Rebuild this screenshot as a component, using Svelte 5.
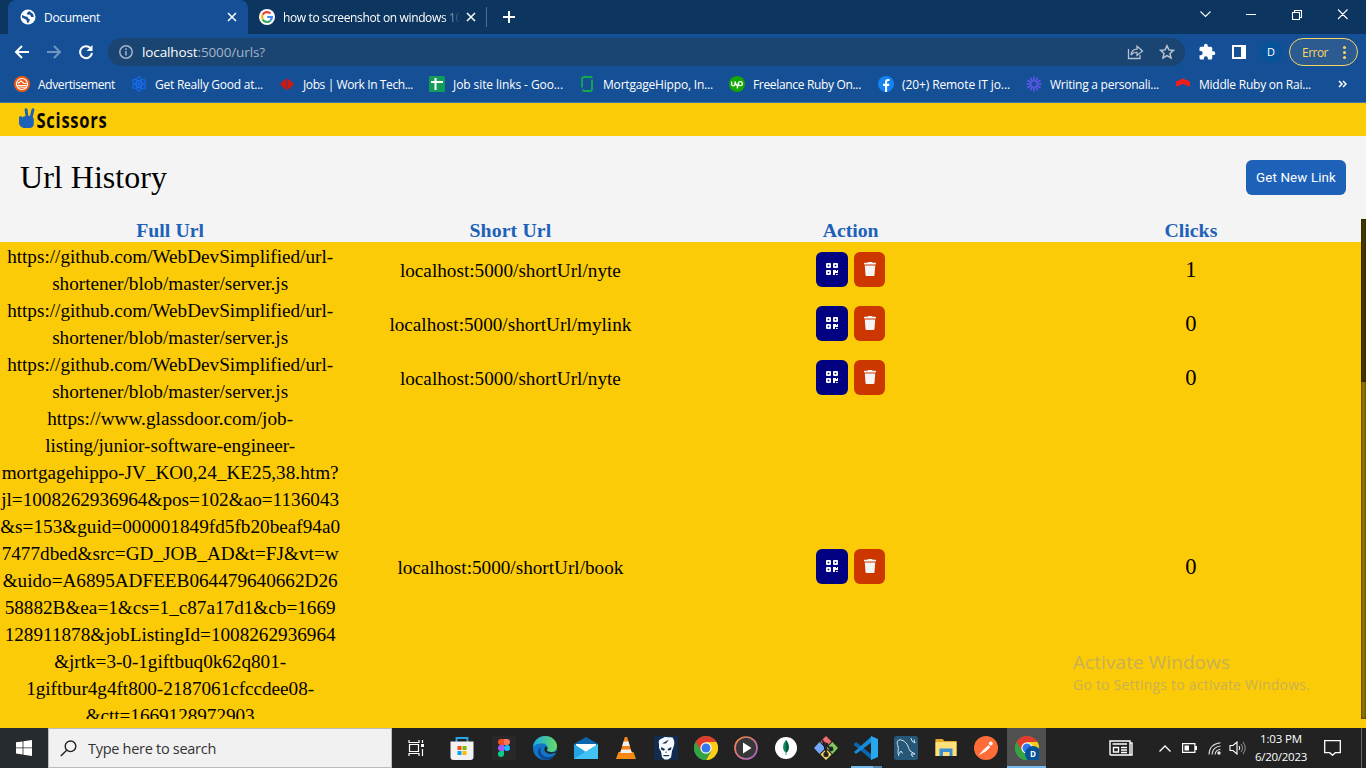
<script>
  // Spreads a single line of text to the given pixel width.
  function fit(node, width) {
    node.style.letterSpacing = '0px';
    const natural = node.getBoundingClientRect().width;
    const count = node.textContent.length;
    node.style.letterSpacing = (width - natural) / count + 'px';
  }

  const bookmarks = [
    { icon: 'ad', label: 'Advertisement', w: 77, x: 14 },
    { icon: 'atom', label: 'Get Really Good at...', w: 108, x: 131 },
    { icon: 'leaf', label: 'Jobs | Work In Tech...', w: 110, x: 279 },
    { icon: 'sheet', label: 'Job site links - Goo...', w: 110, x: 429 },
    { icon: 'hippo', label: 'MortgageHippo, In...', w: 110, x: 579 },
    { icon: 'up', label: 'Freelance Ruby On...', w: 108, x: 729 },
    { icon: 'fb', label: '(20+) Remote IT jo...', w: 108, x: 878 },
    { icon: 'burst', label: 'Writing a personali...', w: 109, x: 1026 },
    { icon: 'chev', label: 'Middle Ruby on Rai...', w: 112, x: 1175 }
  ];

  const github = [
    ['https://github.com/WebDevSimplified/url-', 326],
    ['shortener/blob/master/server.js', 236]
  ];
  const rows = [
    { full: github, short: 'localhost:5000/shortUrl/nyte', w: 221, clicks: 1 },
    { full: github, short: 'localhost:5000/shortUrl/mylink', w: 242, clicks: 0 },
    { full: github, short: 'localhost:5000/shortUrl/nyte', w: 221, clicks: 0 },
    {
      full: [
        ['https://www.glassdoor.com/job-', 246],
        ['listing/junior-software-engineer-', 250],
        ['mortgagehippo-JV_KO0,24_KE25,38.htm?', 337],
        ['jl=1008262936964&pos=102&ao=1136043', 338],
        ['&s=153&guid=000001849fd5fb20beaf94a0', 340],
        ['7477dbed&src=GD_JOB_AD&t=FJ&vt=w', 337],
        ['&uido=A6895ADFEEB064479640662D26', 335],
        ['58882B&ea=1&cs=1_c87a17d1&cb=1669', 331],
        ['128911878&jobListingId=1008262936964', 331],
        ['&jrtk=3-0-1giftbuq0k62q801-', 232],
        ['1giftbur4g4ft800-2187061cfccdee08-', 288],
        ['&ctt=1669128972903', 169]
      ],
      short: 'localhost:5000/shortUrl/book', w: 226, clicks: 0
    }
  ];

  const apps = ['store', 'figma', 'edge', 'mail', 'vlc', 'skull', 'chrome', 'play', 'mongo', 'git', 'code', 'mysql', 'folder', 'postman', 'profile'];
  const rays = [0, 30, 60, 90, 120, 150, 180, 210, 240, 270, 300, 330];
</script>

{#snippet chromeLogo()}
  <circle cx="12" cy="12" r="12" fill="#34a344" />
  <path d="M12 12 1.6 6A12 12 0 0 1 22.4 6Z" fill="#e33b2e" />
  <path d="M12 6H22.4A12 12 0 0 1 12 24l5.2-9Z" fill="#fdcc17" />
  <path d="M1.6 6 6.8 15 12 12V6Z" fill="#e33b2e" />
  <path d="M1.6 6A12 12 0 0 0 12 24l5-9-10 0Z" fill="#34a344" />
  <circle cx="12" cy="12" r="5.7" fill="#fff" />
  <circle cx="12" cy="12" r="4.5" fill="#3478ec" />
{/snippet}

<div class="screen">
  <div class="tabs">
    <div class="tab active">
      <svg class="fav" viewBox="0 0 16 16" width="16" height="16"><circle cx="8" cy="8" r="7.5" fill="#fff" /><path d="M2 6l3.5 1.5 2 .3.6 1.7 1.8.7-.9 3-1.7.8-1-3.3L2 8.5zM9 2l-2.3 2.4.8 1.3 2.5-.2 1.2 2.4 2.6.2-.7-3z" fill="#154f96" /></svg>
      <span class="title" use:fit={56}>Document</span>
      <svg class="close" viewBox="0 0 10 10" width="10" height="10"><path d="M1 1l8 8M9 1L1 9" stroke="#fff" stroke-width="1.5" /></svg>
    </div>
    <div class="tab second">
      <svg class="fav" viewBox="0 0 16 16" width="16" height="16"><circle cx="8" cy="8" r="8" fill="#fff" /><g fill="none" stroke-width="2.2"><path d="M11.5 4.6A4.9 4.9 0 0 0 3.7 5.7" stroke="#e94235" /><path d="M3.7 5.7a4.9 4.9 0 0 0 0 4.7" stroke="#fabb05" /><path d="M3.7 10.4a4.9 4.9 0 0 0 7.6 1.3" stroke="#34a853" /><path d="M11.3 11.7A4.9 4.9 0 0 0 12.9 8H8.2" stroke="#4285f4" /></g></svg>
      <span class="title fade" use:fit={179}>how to screenshot on windows 10</span>
      <svg class="close" viewBox="0 0 10 10" width="10" height="10"><path d="M1 1l8 8M9 1L1 9" stroke="#fff" stroke-width="1.5" /></svg>
    </div>
    <svg class="plus" viewBox="0 0 12 12" width="12" height="12"><path d="M6 0v12M0 6h12" stroke="#fff" stroke-width="2" /></svg>
    <svg class="winctl" viewBox="0 0 166 34" width="166" height="34" fill="none" stroke="#fff" stroke-width="1.1">
      <path d="M.5 11.500l5 5 5-5M46 14.500h10M92.500 12.500h7v7h-7zM94.500 12.500v-2h7v7h-2M138 9.500l9.500 9.500M147.500 9.500l-9.500 9.500" />
    </svg>
  </div>

  <div class="toolbar">
    <svg class="nav" viewBox="0 0 86 16" width="86" height="16" fill="none" stroke="#fff" stroke-width="2">
      <path d="M15 8H2M8 2L2 8l6 6" /><path d="M33 8h13M40 2l6 6-6 6" stroke="#7095c2" /><path d="M76.600 4.200A6 6 0 1 0 78 9" /><path d="M78.500 1v6h-6z" fill="#fff" stroke="none" />
    </svg>
    <div class="address">
      <svg viewBox="0 0 14 14" width="14" height="14" fill="none" stroke="#a3b4c9" stroke-width="1.5"><circle cx="7" cy="7" r="6.200" /><path d="M7 6v4.500M7 3.300v1.600" /></svg>
      <span class="url" use:fit={123}>localhost<i>:5000/urls?</i></span>
      <svg class="addr-icons" viewBox="0 0 48 16" width="48" height="16" fill="none" stroke="#b9c3cf" stroke-width="1.300"><path d="M1.500 5v9.500h11.500V11M4 11c.6-4 3-5.800 6-5.800V2.200L15.500 7 10 11.500V8.500C7.500 8.300 5.500 9 4 11z" /><path d="M40 1.700l1.900 4.200 4.500.5-3.400 3 1 4.500-4-2.300-4 2.300 1-4.500-3.400-3 4.500-.5z" stroke-width="1.500" /></svg>
    </div>
    <svg class="puzzle" viewBox="0 0 24 24" width="18" height="18"><path fill="#fff" d="M20.500 11H19V7a2 2 0 0 0-2-2h-4V3.500a2.500 2.500 0 0 0-5 0V5H4a2 2 0 0 0-2 2v3.800h1.500a2.700 2.700 0 0 1 0 5.400H2V20a2 2 0 0 0 2 2h3.800v-1.500a2.700 2.700 0 0 1 5.400 0V22H17a2 2 0 0 0 2-2v-4h1.500a2.500 2.500 0 0 0 0-5z" /></svg>
    <svg class="panel" viewBox="0 0 14 14" width="14" height="14"><path fill="#fff" fill-rule="evenodd" d="M0 0h14v14H0zM2 2v10h7V2z" /></svg>
    <div class="avatar">D</div>
    <div class="error"><span use:fit={26}>Error</span><b></b></div>
  </div>

  <div class="bookmarks">
    {#each bookmarks as b, i}
      <div class="bm" style:width="{(bookmarks[i + 1]?.x ?? 1338) - b.x}px">
        <svg viewBox="0 0 16 16" width="16" height="16">
          {#if b.icon === 'ad'}
            <circle cx="8" cy="8" r="8" fill="#ee5c16" /><circle cx="8" cy="8" r="5.500" fill="none" stroke="#fff" stroke-width="1.200" /><path d="M3.500 9.500h9M4 7.500l3-2.500 3 2.500 2.500 0M4.500 11l7 .3" fill="none" stroke="#fff" stroke-width="1.100" />
          {:else if b.icon === 'atom'}
            <g fill="none" stroke="#1769e8" stroke-width="1.300"><ellipse cx="8" cy="8" rx="2.700" ry="7.200" /><ellipse cx="8" cy="8" rx="2.700" ry="7.200" transform="rotate(60 8 8)" /><ellipse cx="8" cy="8" rx="2.700" ry="7.200" transform="rotate(120 8 8)" /></g><circle cx="8" cy="8" r="1.500" fill="#1769e8" />
          {:else if b.icon === 'leaf'}
            <path d="M7.600 2v12.500L5.500 12.300H3.800l.3-1.800L1 8.700l1.300-.9-.4-2 1.800.4L5.400 3.500 6 4.200zM8.400 2v12.500l2.100-2.200h1.700l-.3-1.800L15 8.700l-1.300-.9.4-2-1.800.4-1.700-2.700-.6.7z" fill="#d3170c" />
          {:else if b.icon === 'sheet'}
            <rect width="16" height="16" rx="1.500" fill="#119d58" /><path d="M6.500 2v12M2 6h12" stroke="#fff" stroke-width="2" />
          {:else if b.icon === 'hippo'}
            <path d="M3 11.500V3a2 2 0 0 1 2-2h8M5 15h6a2 2 0 0 0 2-2V3.500M3 14.500h2M13 1v1" fill="none" stroke="#16a94a" stroke-width="1.800" />
          {:else if b.icon === 'up'}
            <circle cx="8" cy="8" r="8" fill="#14a800" /><path d="M2.700 5.500v2.400c0 2.500 3.300 2.500 3.300 0V5.500c.5 2 1.500 4 2.500 4.700M8.200 12.500l1-5c.6-2.700 4.200-2.200 4.200.2 0 2.200-2.700 2.500-4 .8" fill="none" stroke="#fff" stroke-width="1.300" />
          {:else if b.icon === 'fb'}
            <circle cx="8" cy="8" r="8" fill="#1683f3" /><path d="M7 16v-6H5V7.800h2V6.200C7 4 8.300 3 10 3l1.500.1v2h-1c-1 0-1.400.5-1.400 1.300v1.400h2.300L11 10H9.100v6z" fill="#fff" />
          {:else if b.icon === 'burst'}
            {#each rays as r}<path d="M8 .5v5" stroke="#6357f3" stroke-width="1.500" transform="rotate({r} 8 8)" />{/each}
          {:else}
            <path d="M1 5.500L8 2.500l7 3v5.300L8 8 1 10.800z" fill="#f01c1c" />
          {/if}
        </svg>
        <span use:fit={b.w}>{b.label}</span>
      </div>
    {/each}
    <svg class="more" viewBox="0 0 9 8" width="9" height="8" fill="none" stroke="#fff" stroke-width="1.500"><path d="M1 1l3 3-3 3M5 1l3 3-3 3" /></svg>
  </div>

  <header>
    <svg viewBox="0 0 110 29" width="110" height="29">
      <path d="M1 11.500c0-1.500 3-1.800 3.300-.3l.4 1V10.800L7.600 10 6.600 4.200c-.4-2.400 2.600-2.800 3-.5l.7 6 1.700.1 1.600-6.500c.6-2 3.200-1.200 2.800.7L14.800 11l1 2v4.500c0 3-1.800 4.500-4.500 4.500H7c-2.500 0-6-2-6-5z" fill="#1d61b8" />
      <text x="18.500" y="21.500" textLength="71" lengthAdjust="spacingAndGlyphs">Scissors</text>
    </svg>
  </header>

  <section class="heading"><h1 use:fit={147}>Url History</h1><button><span use:fit={80}>Get New Link</span></button></section>

  <div class="content">
    <div class="table">
      <div class="row head"><b use:fit={68}>Full Url</b><b use:fit={82}>Short Url</b><b use:fit={56}>Action</b><b use:fit={53}>Clicks</b></div>
      {#each rows as r}
        <div class="row">
          <div class="full">{#each r.full as [line, w]}<p><span use:fit={w}>{line}</span></p>{/each}</div>
          <div class="short"><span use:fit={r.w}>{r.short}</span></div>
          <div class="actions">
            <div class="act qr"><svg viewBox="0 0 12 12" width="12" height="12"><path fill="#fff" fill-rule="evenodd" d="M0 1q0-1 1-1h3q1 0 1 1v3q0 1-1 1H1q-1 0-1-1zM1.700 1.700v1.600h1.600V1.700zM7 1q0-1 1-1h3q1 0 1 1v3q0 1-1 1H8q-1 0-1-1zM8.700 1.700v1.600h1.600V1.700zM0 8q0-1 1-1h3q1 0 1 1v3q0 1-1 1H1q-1 0-1-1zM1.700 8.700v1.600h1.600V8.700zM7 7h3v1h1V7h1v3H9v2H7zM10 11h1v1h-1zM11.300 11h.7v1h-.7z" /></svg></div>
            <div class="act del"><svg viewBox="0 0 12 14" width="12" height="14"><path fill="#f4f4f4" d="M4 0h4l.5.8h3q.5 0 .5.9t-.5.9H.5Q0 2.600 0 1.700t.5-.9h3zM.8 3.400h10.400L10.500 13q-.1 1-1 1h-7q-.9 0-1-1z" /></svg></div>
          </div>
          <div class="clicks">{r.clicks}</div>
        </div>
      {/each}
    </div>
    <div class="scroll"><i></i></div>
    <div class="activate"><p><span use:fit={157}>Activate Windows</span></p><p class="sub"><span use:fit={237}>Go to Settings to activate Windows.</span></p></div>
  </div>

  <footer>
    <div class="start"><svg viewBox="0 0 16 16" width="16" height="16"><path fill="#fff" d="M0 2.300l6.600-.9v6.100H0zM7.400 1.300L16 0v7.500H7.400zM0 8.300h6.600v6.100L0 13.500zM7.400 8.300H16V16l-8.600-1.300z" /></svg></div>
    <div class="search"><svg viewBox="0 0 17 17" width="17" height="17" fill="none" stroke="#222" stroke-width="1.400"><circle cx="10.500" cy="6.300" r="5.300" /><path d="M6.700 10.200L.8 16" /></svg><span use:fit={128}>Type here to search</span></div>
    <div class="taskview"><svg viewBox="0 0 17 16" width="17" height="16" fill="none" stroke="#fff" stroke-width="1.200"><path d="M1 0v2.500h10V0M1.500 4.500h9v7h-9zM1 16v-2.500h10V16M14.500 0v3M14.500 9v7" /><path d="M13 4h3v3h-3z" fill="#fff" stroke="none" /></svg></div>
    {#each apps as a}
      <div class="app {a}">
        <svg viewBox="0 0 24 24" width="24" height="24">
          {#if a === 'store'}
            <path d="M6.500 7V2h11v5" fill="none" stroke="#26a8e8" stroke-width="1.800" /><path d="M.5 5.500h23V21a3 3 0 0 1-3 3h-17a3 3 0 0 1-3-3z" fill="#f2f2f2" /><path d="M7.500 10h4v4h-4z" fill="#f25022" /><path d="M12.500 10h4v4h-4z" fill="#7fba00" /><path d="M7.500 15h4v4h-4z" fill="#00a4ef" /><path d="M12.500 15h4v4h-4z" fill="#ffb900" />
          {:else if a === 'figma'}
            <rect width="24" height="24" rx="2" fill="#282828" /><path d="M12 3H9a3 3 0 0 0 0 6h3z" fill="#f24e1e" /><path d="M12 3h3a3 3 0 0 1 0 6h-3z" fill="#ff7262" /><path d="M12 9H9a3 3 0 0 0 0 6h3z" fill="#a259ff" /><circle cx="15" cy="12" r="3" fill="#1abcfe" /><path d="M12 15H9a3 3 0 1 0 3 3z" fill="#0acf83" />
          {:else if a === 'edge'}
            <defs><linearGradient id="edge"><stop stop-color="#1ba8e4" /><stop offset="1" stop-color="#65dc65" /></linearGradient></defs>
            <circle cx="12" cy="12" r="12" fill="#1276c8" /><path d="M0 11C1 4 6 0 12 0c7 0 12 5 12 10 0 4-3 6-6.500 6-2.500 0-4.200-1-3.500-2 1.500-2 .5-6-4-6.500C6 7 2 8 0 11z" fill="url(#edge)" /><path d="M7.500 11c-1 5 2 10 8 10 3 0 5-1 6.500-3-3 7-13 8-16.500 1-1.500-3-.5-6.500 2-8z" fill="#0d4a96" /><path d="M12 11c-2 4 1.500 7 6 7l4-1.300 1 .3.600-2C21.500 16.200 19.500 16.500 17 16c-2.500-.4-3.800-1.300-3-2 .7-1.200.5-2.700-.5-3.500z" fill="#222" />
          {:else if a === 'mail'}
            <path d="M0 8L12 1l12 7v4H0z" fill="#0b66ad" /><path d="M2 8h20v8H2z" fill="#fff" /><path d="M0 8l12 8 12-8v15H0z" fill="#21a5e6" /><path d="M0 23L24 8v15z" fill="#42c3f4" />
          {:else if a === 'vlc'}
            <path d="M4.500 16h15l2.500 7H2z" fill="#f48b13" /><path d="M10.800 1h2.400l5 17c-3 2-9.400 2-12.400 0z" fill="#f58316" /><path d="M9.500 5.500h5l1.300 4.500H8.200zM7.200 13.500h9.600l1 3.500H6.200z" fill="#eee" />
          {:else if a === 'skull'}
            <rect width="24" height="24" fill="#122c4e" /><path d="M5 8C3.500 2.500 8 3 10.500 1l8 .5c2.500 3 2 7 1 9.500l-1.500 4-1 6.500-3 2h-3.500L8 21l-1-5.500-2-3.500z" fill="#f7fbff" /><path d="M7 11l4 2-1 1.800-2.800-1zM17.500 11L13.500 13l1 1.800 2.500-1zM11.300 16.800l.8-1.800.8 1.800zM9 19h6.500l-.8 1.200h-5zM8 7.500l7-4-3 4z" fill="#173354" />
          {:else if a === 'chrome'}
            {@render chromeLogo()}
          {:else if a === 'play'}
            <defs><linearGradient id="ring" x2="1" y2="1"><stop stop-color="#f28b38" /><stop offset="1" stop-color="#a961d5" /></linearGradient></defs><circle cx="12" cy="12" r="11" fill="#373737" stroke="url(#ring)" stroke-width="1.700" /><path d="M9 6.500l8.500 5.500L9 17.500z" fill="#fff" />
          {:else if a === 'mongo'}
            <circle cx="12" cy="12" r="11" fill="#fff" /><path d="M12 4c3.800 4.500 3.500 10 .4 12.500V19h-.8v-2.500C8.500 14 8 8.500 12 4z" fill="#11875b" /><path d="M12 4c3.800 4.500 3.500 10 .4 12.500H12z" fill="#075b42" />
          {:else if a === 'git'}
            <path d="M12 0l5.500 5.500L12 11 6.500 5.500z" fill="#f26d70" /><path d="M18.500 6l5.500 6-5.500 6-6-6z" fill="#7cc95c" /><path d="M5.500 6l6 6-6 6L0 12z" fill="#73a7fb" /><path d="M12 13l5.500 5.500L12 24l-5.500-5.500z" fill="#fbdb66" /><g stroke="#292929" stroke-width="1.900"><path d="M8 4l4 5v10M12 9l5 4" /><circle cx="12" cy="9" r="1.500" /><circle cx="12" cy="18.500" r="1.700" /><circle cx="17" cy="13" r="1.500" /></g>
          {:else if a === 'code'}
            <path d="M0 8l2-2 16 13v5L0 9z" fill="#086ab5" /><path d="M0 16l18-16v6L2 18z" fill="#168bdc" /><path d="M17 0l7 3v18l-7 3z" fill="#27a7ef" />
          {:else if a === 'mysql'}
            <rect width="24" height="24" rx="2.500" fill="#265777" /><path d="M5 20C3 16 5 14 4 10 2 6 4 3 7 4c6 1 7 7 9 11l5 3-4 0 2 3M5 18l2-3 1.500 2.500M17 2l1 3 3 2-1-3.500" fill="none" stroke="#d5e4ed" stroke-width="1" />
          {:else if a === 'folder'}
            <path d="M1.500 3h7l2 2h12v15h-21z" fill="#e9a928" /><path d="M1.500 6h21v14h-21z" fill="#ffe07a" /><path d="M5.500 12.500h13V20h-3v-4H9v4H5.500z" fill="#3b8ed0" />
          {:else if a === 'postman'}
            <circle cx="12" cy="12" r="12" fill="#ff6c37" /><path d="M5.500 18.500l5-5.500 4-3.500 1.500 1.500-4 4-6.500 3.500z" fill="#fff" stroke="#fff" stroke-width=".6" /><circle cx="16.800" cy="7.500" r="1.900" fill="#fff" />
          {:else}
            {@render chromeLogo()}<circle cx="18" cy="18" r="8" fill="#06519b" /><text x="18" y="21" text-anchor="middle" font-size="8" font-weight="700" fill="#fff">D</text>
          {/if}
        </svg>
      </div>
    {/each}
    <div class="tray">
      <svg viewBox="0 0 24 16" width="24" height="16" fill="none" stroke="#fff" stroke-width="1.400"><path d="M21 3h2v12H2q-1 0-1-1V1h20v14M3.500 4H18M4.500 7.500h5v4.500h-5zM12 7.500h6M12 10h6M12 12.500h6" /></svg>
      <svg class="up" viewBox="0 0 12 7" width="12" height="7"><path d="M.5 6.500L6 1l5.500 5.500" fill="none" stroke="#fff" stroke-width="1.300" /></svg>
      <svg class="bat" viewBox="0 0 15 10" width="15" height="10"><path d="M.6.6h12.300v8.800H.6z" fill="none" stroke="#fff" stroke-width="1.200" /><path d="M2.500 2.500H7v5H2.500zM13 3h2v4h-2z" fill="#fff" /></svg>
      <svg class="wifi" viewBox="0 0 13 13" width="13" height="13" fill="none" stroke="#ddd" stroke-width="1.100"><path d="M1 12.500Q1.500 2 12.500.8M4 12.500Q4.500 5 12.500 4M7 12.500Q7.500 8 12.500 7.300" /><circle cx="11" cy="11" r="1.200" fill="#fff" /></svg>
      <svg class="vol" viewBox="0 0 17 14" width="17" height="14" fill="none" stroke="#fff" stroke-width="1.100"><path d="M1 4.500h3L8 1v12L4 9.500H1z" /><path d="M10 5q1.500 2 0 4" /><path d="M12 3q3 4 0 8M14 1q4.500 6 0 12" stroke="#888" /></svg>
      <div class="clock"><p><span use:fit={42}>1:03 PM</span></p><p><span use:fit={52}>6/20/2023</span></p></div>
      <svg class="note" viewBox="0 0 17 16" width="17" height="16"><path d="M.7.7h15.600v12h-5L8.500 15.300 5.700 12.700h-5z" fill="none" stroke="#fff" stroke-width="1.300" /></svg>
      <i class="peek"></i>
    </div>
  </footer>
</div>

<style>
  :global(body) { margin: 0; overflow: hidden; }
  * { box-sizing: border-box; }
  p, h1 { margin: 0; }
  svg { display: block; flex: none; }
  .screen { width: 1366px; height: 768px; display: flex; flex-direction: column; overflow: hidden; font-family: "Open Sans", "Noto Sans", sans-serif; background: #f4f4f4; white-space: nowrap; }
  .screen > * { flex: none; }
  .tabs { height: 34px; background: #0c355f; display: flex; align-items: center; color: #fff; font-size: 12px; }
  .tab { height: 34px; display: flex; align-items: center; }
  .tab.active { width: 240px; margin-left: 8px; padding: 0 11px 0 12px; background: #154f96; border-radius: 8px 8px 0 0; }
  .tab.second { width: 239px; padding: 0 10px 0 11px; border-right: 1px solid #4e6e91; height: 20px; }
  .title { margin-left: 8px; flex: none; }
  .close { margin-left: auto; }
  .fade { -webkit-mask-image: linear-gradient(90deg, #000 160px, transparent 177px); mask-image: linear-gradient(90deg, #000 160px, transparent 177px); }
  .plus { margin-left: 16px; }
  .winctl { margin-left: auto; }
  .toolbar { height: 36px; background: #154f96; display: flex; align-items: center; }
  .nav { margin-left: 14px; }
  .address { margin-left: 8px; width: 1077px; height: 28px; border-radius: 14px; background: #1a4472; display: flex; align-items: center; padding: 0 10px 0 11px; }
  .url { margin-left: 9px; font-size: 13.500px; color: #fff; line-height: 20px; }
  .url i { font-style: normal; color: #a3b4c9; }
  .addr-icons { margin-left: auto; }
  .puzzle { margin-left: 13px; }
  .panel { margin-left: 16px; }
  .avatar { margin-left: 14px; width: 22px; height: 22px; border-radius: 50%; background: #07539a; color: #fff; font-size: 11px; line-height: 22px; text-align: center; }
  .error { margin-left: 7px; width: 69px; height: 28px; border: 1px solid #f8d567; border-radius: 14px; background: #2b5b91; color: #f8d567; font-size: 12px; display: flex; align-items: center; padding-left: 12px; }
  .error b { width: 3px; height: 3px; border-radius: 50%; margin-left: 15px; background: #f8d567; box-shadow: 0 -5px #f8d567, 0 5px #f8d567; }
  .bookmarks { height: 33px; background: #154f96; border-bottom: 1px solid #4274ad; display: flex; padding-left: 14px; color: #fff; font-size: 12px; align-items: center; }
  .bm { display: flex; align-items: center; height: 28px; margin-top: -4px; }
  .bm span { margin-left: 8px; }
  .more { margin-top: -4px; }
  header { height: 33px; background: #fccb07; padding: 3px 0 0 18px; }
  header text { font: 700 22px "Open Sans", sans-serif; letter-spacing: 1px; fill: #080800; }
  .heading { height: 83px; display: flex; align-items: center; justify-content: space-between; padding: 0 20px; font-family: "Liberation Serif", serif; }
  h1 { font-size: 32px; font-weight: 400; }
  button { border: 0; width: 100px; height: 35px; border-radius: 6px; background: #1d61b8; color: #fff; font: 400 13.330px Roboto, sans-serif; padding: 0; }
  .content { position: relative; height: 509px; background: #fccb07; display: flex; align-items: flex-start; }
  .table { width: 1361px; height: 500px; overflow: hidden; font-family: "Liberation Serif", serif; font-size: 19.200px; }
  .row { display: grid; grid-template-columns: repeat(4, 1fr); justify-items: center; align-items: center; }
  .head { height: 23px; background: #f4f4f4; color: #1d61b8; font-size: 19.800px; line-height: 23px; margin-bottom: 1px; }
  .full p { height: 27px; line-height: 27px; text-align: center; }
  .short { line-height: 27px; }
  .actions { display: flex; gap: 6px; margin-top: -1px; }
  .act { height: 35px; width: 32px; border-radius: 6px; display: grid; place-items: center; padding-bottom: 1px; }
  .qr { background: #000080; }
  .del { background: #cc3700; width: 31px; }
  .clicks { font-size: 22.500px; line-height: 27px; margin-top: -2px; }
  .scroll { width: 5px; height: 500px; background: #967800; box-shadow: inset 0 0 3px #302600; }
  .scroll i { display: block; height: 163px; background: #4a3c00; box-shadow: inset 0 0 3px #171200; }
  .activate { position: absolute; left: 1073px; top: 430px; color: #c9b055; font-size: 19px; font-weight: 400; }
  .activate p { height: 26px; line-height: 26px; }
  .activate .sub { height: 20px; line-height: 20px; font-size: 14px; }
  footer { height: 40px; background: #222; display: flex; }
  .start { width: 48px; background: #262b2f; display: grid; place-items: center; }
  .search { width: 344px; background: #f1f1f1; border: 1px solid #bbb; display: flex; align-items: center; padding-left: 11px; color: #333; font-size: 14.500px; }
  .search span { margin-left: 11px; }
  .taskview { width: 50px; height: 40px; padding: 12px 0 0 16px; }
  .app { width: 40px; height: 40px; padding-top: 8px; display: flex; justify-content: center; align-items: flex-start; }
  .store { margin-right: 2px; }
  .figma, .edge { margin-right: 1px; }
  .code { background: linear-gradient(90deg, #76b9ed 22px, #5286ad 22px) center bottom / 31px 2px no-repeat; }
  .profile { width: 39px; margin-left: 1px; background: #505050; border-bottom: 2px solid #76b9ed; }
  .tray { flex: 1; display: flex; align-items: center; color: #fff; }
  .tray > svg:first-child { margin-left: 63px; }
  .up { margin-left: 26px; }
  .bat { margin-left: 11px; }
  .wifi { margin-left: 11px; }
  .vol { margin-left: 8px; }
  .clock { margin-left: 9px; width: 52px; font-size: 11.500px; text-align: center; padding-bottom: 1px; }
  .clock p { height: 18px; line-height: 18px; }
  .note { margin-left: 17px; }
  .peek { width: 1px; height: 40px; margin-left: 20px; background: #666; }
</style>
